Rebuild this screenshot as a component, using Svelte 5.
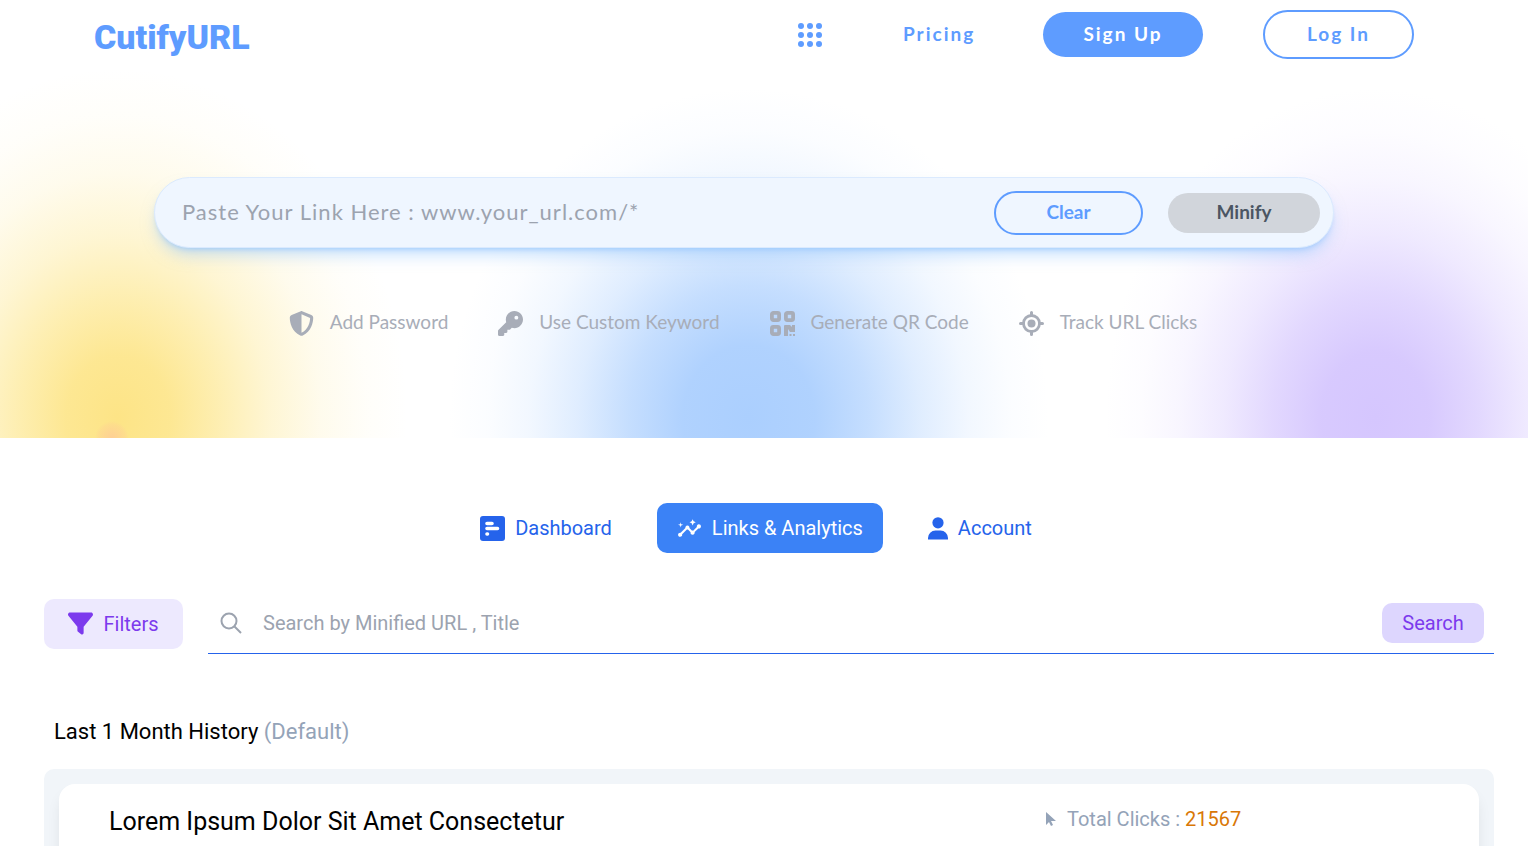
<script>
  let link = $state("");
  let query = $state("");

  const dots = [4, 13, 22];
  const features = [
    { icon: "shield", label: "Add Password" },
    { icon: "key", label: "Use Custom Keyword" },
    { icon: "qr", label: "Generate QR Code" },
    { icon: "target", label: "Track URL Clicks" },
  ];
  const tabs = [
    { icon: "board", label: "Dashboard" },
    { icon: "insights", label: "Links & Analytics", active: true },
    { icon: "user", label: "Account" },
  ];
  const links = [{ title: "Lorem Ipsum Dolor Sit Amet Consectetur", clicks: 21567 }];
</script>

{#snippet icon(name)}
  {#if name === "shield"}
    <svg class="icon" viewBox="0 0 512 512" aria-hidden="true">
      <path d="M256 0c4.600 0 9.200 1 13.400 2.900L457.700 82.800c22 9.300 38.400 31 38.300 57.200c-.5 99.200-41.300 280.700-213.600 363.200c-16.700 8-36.100 8-52.800 0C57.300 420.700 16.500 239.200 16 140c-.1-26.200 16.300-47.900 38.300-57.200L242.700 2.900C246.800 1 251.400 0 256 0zm0 66.800V444.800C394 378 431.100 230.100 432 141.400L256 66.800z" />
    </svg>
  {:else if name === "key"}
    <svg class="icon" viewBox="0 0 512 512" aria-hidden="true">
      <path d="M336 352c97.200 0 176-78.800 176-176S433.200 0 336 0S160 78.800 160 176c0 18.700 2.900 36.800 8.300 53.700L7 391c-4.500 4.500-7 10.600-7 17v80c0 13.300 10.700 24 24 24h80c13.300 0 24-10.700 24-24V448h40c13.300 0 24-10.700 24-24V384h40c6.400 0 12.500-2.500 17-7l33.300-33.300c16.900 5.400 35 8.300 53.700 8.300zM376 96a40 40 0 1 1 0 80 40 40 0 1 1 0-80z" />
    </svg>
  {:else if name === "qr"}
    <svg class="icon" viewBox="0 0 25 25" aria-hidden="true">
      <g fill="none" stroke="currentColor" stroke-width="3.800">
        <rect x="1.900" y="1.900" width="7.200" height="7.200" rx="1.500" />
        <rect x="15.900" y="1.900" width="7.200" height="7.200" rx="1.500" />
        <rect x="1.900" y="15.900" width="7.200" height="7.200" rx="1.500" />
      </g>
      <path d="M14 15a1 1 0 0 1 1-1h5l2 2v-2h3v7h-5l-2-3v7h-4zM19.500 23h2v2h-2zM23 23h2v2h-2z" />
    </svg>
  {:else if name === "target"}
    <svg class="icon" viewBox="0 0 25 25" aria-hidden="true">
      <g fill="none" stroke="currentColor" stroke-width="3" stroke-linecap="round">
        <circle cx="12.500" cy="12.500" r="8" stroke-width="2.800" />
        <path d="M12.500 1.500v3M12.500 20.500v3M1.500 12.500h3M20.500 12.500h3" />
      </g>
      <circle cx="12.500" cy="12.500" r="4" />
    </svg>
  {:else if name === "board"}
    <svg class="icon" viewBox="0 0 25 25" aria-hidden="true">
      <rect width="25" height="25" rx="3" />
      <g fill="none" stroke="#fff" stroke-width="3.600" stroke-linecap="round">
        <path d="M7 7.500h5M7 12.500h10.500M7 18h.5" />
      </g>
    </svg>
  {:else if name === "insights"}
    <svg class="icon" viewBox="0 0 24 24" aria-hidden="true">
      <path d="M21 8c-1.450 0-2.260 1.440-1.930 2.510l-3.550 3.560c-.3-.09-.74-.09-1.040 0l-2.550-2.550C12.270 10.450 11.460 9 10 9c-1.450 0-2.270 1.440-1.930 2.520l-4.560 4.550C2.440 15.740 1 16.550 1 18c0 1.100.9 2 2 2 1.450 0 2.260-1.440 1.930-2.510l4.550-4.560c.3.09.74.09 1.040 0l2.550 2.550C12.730 16.550 13.540 18 15 18c1.450 0 2.270-1.440 1.930-2.520l3.560-3.550c1.070.33 2.510-.48 2.510-1.930 0-1.100-.9-2-2-2z" />
      <path d="M15 9l.94-2.070L18 6l-2.060-.93L15 3l-.92 2.070L12 6l2.080.93zM3.500 11L4 9l2-.5L4 8l-.5-2L3 8l-2 .5L3 9z" />
    </svg>
  {:else if name === "user"}
    <svg class="icon narrow" viewBox="0 0 20 25" aria-hidden="true">
      <circle cx="10" cy="6.800" r="5.600" />
      <path d="M0 23.500v-1.500a7.500 7.500 0 0 1 7.500-7.500h5a7.500 7.500 0 0 1 7.500 7.500v1.500z" />
    </svg>
  {:else if name === "funnel"}
    <svg class="icon" viewBox="0 0 512 512" aria-hidden="true">
      <path d="M4 35C10 21 24 12 40 12H472c16 0 30 9 36 23s5 30-5 42L320 301V428c0 12-7 23-18 29s-24 4-33-3l-64-48c-8-6-13-16-13-26V301L9 77C-1 65-3 49 4 35z" />
    </svg>
  {/if}
{/snippet}

<div class="page">
  <div class="hero">
    <header>
      <a class="logo" href="/">CutifyURL</a>
      <nav>
        <button class="apps" type="button" aria-label="Apps">
          <svg class="icon" viewBox="0 0 26 26" aria-hidden="true">
            {#each dots as cy}
              {#each dots as cx}
                <circle {cx} {cy} r="3" />
              {/each}
            {/each}
          </svg>
        </button>
        <a class="pricing" href="/pricing">Pricing</a>
        <button class="pill signup" type="button">Sign Up</button>
        <button class="pill login" type="button">Log In</button>
      </nav>
    </header>

    <form class="minify" onsubmit={(e) => e.preventDefault()}>
      <input
        type="text"
        bind:value={link}
        placeholder="Paste Your Link Here : www.your_url.com/*"
        aria-label="Link to minify"
      />
      <button class="clear" type="button" onclick={() => (link = "")}>Clear</button>
      <button class="submit" type="submit">Minify</button>
    </form>

    <ul class="features">
      {#each features as f}
        <li>{@render icon(f.icon)}<span>{f.label}</span></li>
      {/each}
    </ul>
  </div>

  <main>
    <nav class="tabs">
      {#each tabs as t}
        <a href="/dashboard" class:active={t.active}>{@render icon(t.icon)}{t.label}</a>
      {/each}
    </nav>

    <div class="toolbar">
      <button class="filters" type="button">{@render icon("funnel")}Filters</button>
      <form class="search" onsubmit={(e) => e.preventDefault()}>
        <svg class="lens" viewBox="0 0 22 22" aria-hidden="true">
          <circle cx="9" cy="9" r="7.500" />
          <path d="M14.500 14.500L21 21" />
        </svg>
        <input
          type="text"
          bind:value={query}
          placeholder="Search by Minified URL , Title"
          aria-label="Search links"
        />
        <button type="submit">Search</button>
      </form>
    </div>

    <h2>Last 1 Month History <span>(Default)</span></h2>

    <section class="history">
      {#each links as l}
        <article>
          <h3>{l.title}</h3>
          <p class="clicks">
            <svg viewBox="0 0 12 16" aria-hidden="true">
              <path d="M1 1v13l3-3 2 4 2-1-2-4h5z" />
            </svg>
            <span>Total Clicks : <b>{l.clicks}</b></span>
          </p>
        </article>
      {/each}
    </section>
  </main>
</div>

<style>
  :global(body) {
    margin: 0;
    background: #fff;
  }

  .page {
    height: 100vh;
    overflow: hidden;
    font-family: Roboto, sans-serif;
    font-size: 20px;
  }
  button,
  input {
    font: inherit;
    border: 0;
    padding: 0;
    background: none;
    color: inherit;
  }
  button {
    cursor: pointer;
  }
  input {
    outline: none;
    min-width: 0;
  }
  input::placeholder {
    color: #9ca3af;
    opacity: 1;
  }
  a {
    color: inherit;
    text-decoration: none;
  }
  .icon {
    width: 25px;
    height: 25px;
    flex: none;
    fill: currentColor;
  }
  .narrow {
    width: 20px;
  }

  /* hero with the three colour glows */
  .hero {
    box-sizing: border-box;
    height: 438px;
    font-family: Lato, sans-serif;
    font-size: 19px;
    background:
      radial-gradient(circle 17px at 112px 100%, #fecf94 0%, #fed69080 80%, #fed69000 100%),
      radial-gradient(ellipse 290px 350px at 118px 418px, #fde486 0%, #fde588e8 18%, #fde68aa8 35%, #fde68a60 52%, #fde68a28 70%, #fde68a0c 86%, #fde68a00 100%),
      radial-gradient(ellipse 300px 330px at 49% 418px, #abcffe 0%, #abcffef0 22%, #abcffeb0 40%, #abcffe60 57%, #abcffe28 73%, #abcffe0c 87%, #abcffe00 100%),
      radial-gradient(ellipse 270px 330px at 90% 418px, #d5c6fe 0%, #d5c6fef0 20%, #d5c6feb0 38%, #d5c6fe60 56%, #d5c6fe28 73%, #d5c6fe0c 87%, #d5c6fe00 100%),
      #fff;
  }

  header {
    display: flex;
    align-items: center;
    justify-content: space-between;
    height: 49px;
    padding: 10px 114px 0 94px;
    color: #5e9cff;
  }
  .logo {
    padding-top: 4px;
    font-family: Roboto, sans-serif;
    font-size: 34px;
    font-weight: 900;
  }
  header nav {
    display: flex;
    align-items: center;
    font-weight: 700;
    letter-spacing: 2px;
  }
  .apps {
    display: flex;
    margin-right: 80px;
  }
  .apps .icon {
    width: 26px;
    height: 26px;
  }
  .pricing {
    width: 80px;
    margin-right: 60px;
    padding-bottom: 3px;
  }
  .pill {
    box-sizing: border-box;
    padding-bottom: 3px;
    border-radius: 25px;
    letter-spacing: 2px;
  }
  .signup {
    width: 160px;
    height: 45px;
    margin-right: 60px;
    background: #5e9cff;
    color: #fff;
  }
  .login {
    width: 151px;
    height: 49px;
    border: 2px solid #5e9cff;
  }

  .minify {
    box-sizing: border-box;
    display: flex;
    align-items: center;
    height: 71px;
    margin: 118px 194px 0 154px;
    padding: 0 13px 0 27px;
    border: 1px solid #dbeafe;
    border-radius: 36px;
    background: #eff6ff;
    box-shadow: 0 10px 15px -3px #93c5fd80, 0 4px 6px -4px #93c5fd;
  }
  .minify input {
    flex: 1;
    padding-bottom: 2px;
    font-size: 22px;
    letter-spacing: 1px;
  }
  .minify button {
    box-sizing: border-box;
    padding-bottom: 2px;
    font-weight: 700;
    border-radius: 22px;
  }
  .minify .clear {
    width: 149px;
    height: 44px;
    margin-right: 25px;
    border: 2px solid #5e9cff;
    color: #5e9cff;
  }
  .minify .submit {
    width: 152px;
    height: 40px;
    background: #d1d5db;
    color: #4b5563;
  }

  .features {
    display: flex;
    justify-content: center;
    gap: 50px;
    margin: 60px 0 0;
    padding: 0 42px 0 0;
    list-style: none;
    color: #a8adb8;
  }
  .features li {
    display: flex;
    align-items: center;
    gap: 16px;
    height: 30px;
  }
  .features span {
    padding-bottom: 3px;
  }

  main {
    padding: 65px 34px 0 44px;
  }

  .tabs {
    display: flex;
    justify-content: center;
    gap: 25px;
    padding-right: 26px;
    color: #2563eb;
  }
  .tabs a {
    display: flex;
    align-items: center;
    gap: 10px;
    height: 50px;
    padding: 0 20px;
    border-radius: 10px;
  }
  .tabs .active {
    background: #3b82f6;
    color: #fff;
  }

  .toolbar {
    display: flex;
    gap: 25px;
    margin-top: 40px;
  }
  .filters {
    display: flex;
    align-items: center;
    justify-content: center;
    gap: 10px;
    width: 139px;
    height: 50px;
    margin-top: 6px;
    border-radius: 10px;
    background: #ede9fe;
    color: #7c3aed;
  }
  .search {
    box-sizing: border-box;
    flex: 1;
    display: flex;
    align-items: center;
    height: 61px;
    padding: 0 10px 0 12px;
    border-bottom: 1px solid #2563eb;
  }
  .lens {
    width: 22px;
    height: 22px;
    margin-right: 21px;
    fill: none;
    stroke: #9ca3af;
    stroke-width: 2;
  }
  .search input {
    flex: 1;
  }
  .search button {
    width: 102px;
    height: 40px;
    border-radius: 10px;
    background: #ddd6fe;
    color: #7c3aed;
  }

  h2 {
    margin: 60px 0 0 10px;
    font-size: 22px;
    font-weight: 400;
    line-height: 35px;
  }
  h2 span {
    color: #94a3b8;
  }

  .history {
    margin-top: 20px;
    padding: 15px;
    border-radius: 10px;
    background: #f1f5f9;
  }
  article {
    display: grid;
    grid-template-columns: minmax(0, 1fr) 434px;
    min-height: 200px;
    padding-left: 50px;
    border-radius: 16px;
    background: #fff;
    box-shadow: 0 10px 15px -3px #0000001a;
  }
  h3 {
    margin: 20px 0 0;
    font-size: 25px;
    font-weight: 400;
    line-height: 35px;
  }
  .clicks {
    display: flex;
    align-items: center;
    gap: 10px;
    height: 30px;
    margin: 20px 0 0;
    color: #94a3b8;
  }
  .clicks svg {
    width: 12px;
    height: 16px;
    fill: currentColor;
  }
  .clicks b {
    font-weight: 400;
    color: #d97706;
  }
</style>
